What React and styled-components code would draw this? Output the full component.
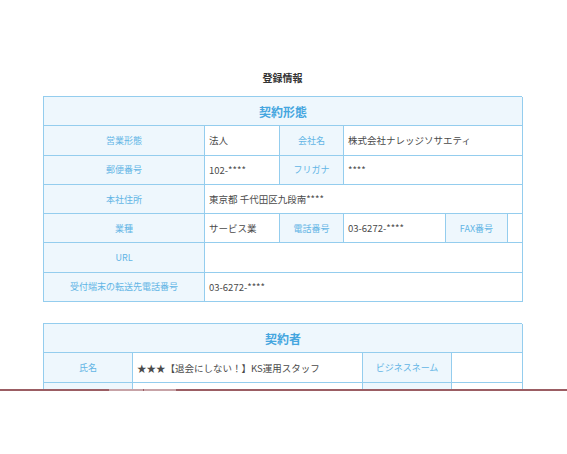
import React from "react";
import styled, { createGlobalStyle } from "styled-components";

const Global = createGlobalStyle`
  html, body { margin: 0; padding: 0; background: #fff; }
  body { font-family: "Noto Sans CJK JP", "Noto Sans", sans-serif; color: #444; }
`;

const Page = styled.div`
  padding-top: 70px;
  padding-right: 2px;
  display: flex;
  flex-direction: column;
  align-items: center;
`;

const Title = styled.h2`
  margin: 0 0 11px;
  font-size: 10px;
  line-height: 15px;
  font-weight: 700;
  color: #333;
`;

const Table = styled.div`
  width: 479px;
  display: grid;
  grid-template-columns: ${(p) => p.$cols};
  border-top: 1px solid #94cdee;
  border-left: 1px solid #94cdee;
  box-sizing: border-box;
  margin-bottom: ${(p) => p.$mb || 0}px;
`;

const Cell = styled.div`
  grid-column: span ${(p) => p.$span || 1};
  height: 29.3px;
  box-sizing: border-box;
  border-right: 1px solid #94cdee;
  border-bottom: 1px solid #94cdee;
  display: flex;
  align-items: center;
  font-size: 9px;
  white-space: nowrap;
  overflow: hidden;
`;

const Head = styled(Cell)`
  justify-content: center;
  background: #eef7fd;
  color: #45a6df;
  font-size: 12px;
  font-weight: 700;
`;

const Label = styled(Cell)`
  justify-content: center;
  background: #eef7fd;
  color: #62b5e5;
  font-size: 9px;
`;

const Value = styled(Cell)`
  padding-left: 4px;
  color: #4a4a4a;
  font-size: 9.5px;
  background: #fff;
`;

const Footer = styled.div`
  position: fixed;
  left: 0;
  right: 0;
  top: 389px;
  bottom: 0;
  background: #fff;
  border-top: 2px solid #9b5d63;
`;

const Seg = styled.div`
  position: absolute;
  top: -2px;
  height: 2px;
  left: ${(p) => p.$x}px;
  width: ${(p) => p.$w}px;
  background: #c7a3a7;
`;

export default function App() {
  return (
    <>
      <Global />
      <Page>
        <Title>登録情報</Title>
        <Table $cols="161px 75px 64px 102px 62px 15px" $mb={21}>
          <Head $span={6}>契約形態</Head>
          <Label>営業形態</Label>
          <Value>法人</Value>
          <Label>会社名</Label>
          <Value $span={3}>株式会社ナレッジソサエティ</Value>
          <Label>郵便番号</Label>
          <Value>102-****</Value>
          <Label>フリガナ</Label>
          <Value $span={3}>****</Value>
          <Label>本社住所</Label>
          <Value $span={5}>東京都 千代田区九段南****</Value>
          <Label>業種</Label>
          <Value>サービス業</Value>
          <Label>電話番号</Label>
          <Value>03-6272-****</Value>
          <Label>FAX番号</Label>
          <Value />
          <Label>URL</Label>
          <Value $span={5} />
          <Label>受付端末の転送先電話番号</Label>
          <Value $span={5}>03-6272-****</Value>
        </Table>
        <Table $cols="89px 230px 89px 71px">
          <Head $span={4}>契約者</Head>
          <Label>氏名</Label>
          <Value>★★★【退会にしない！】KS運用スタッフ</Value>
          <Label>ビジネスネーム</Label>
          <Value />
          <Label />
          <Value />
          <Label />
          <Value />
        </Table>
      </Page>
      <Footer>
        <Seg $x={109} $w={34} />
        <Seg $x={144} $w={32} />
      </Footer>
    </>
  );
}
